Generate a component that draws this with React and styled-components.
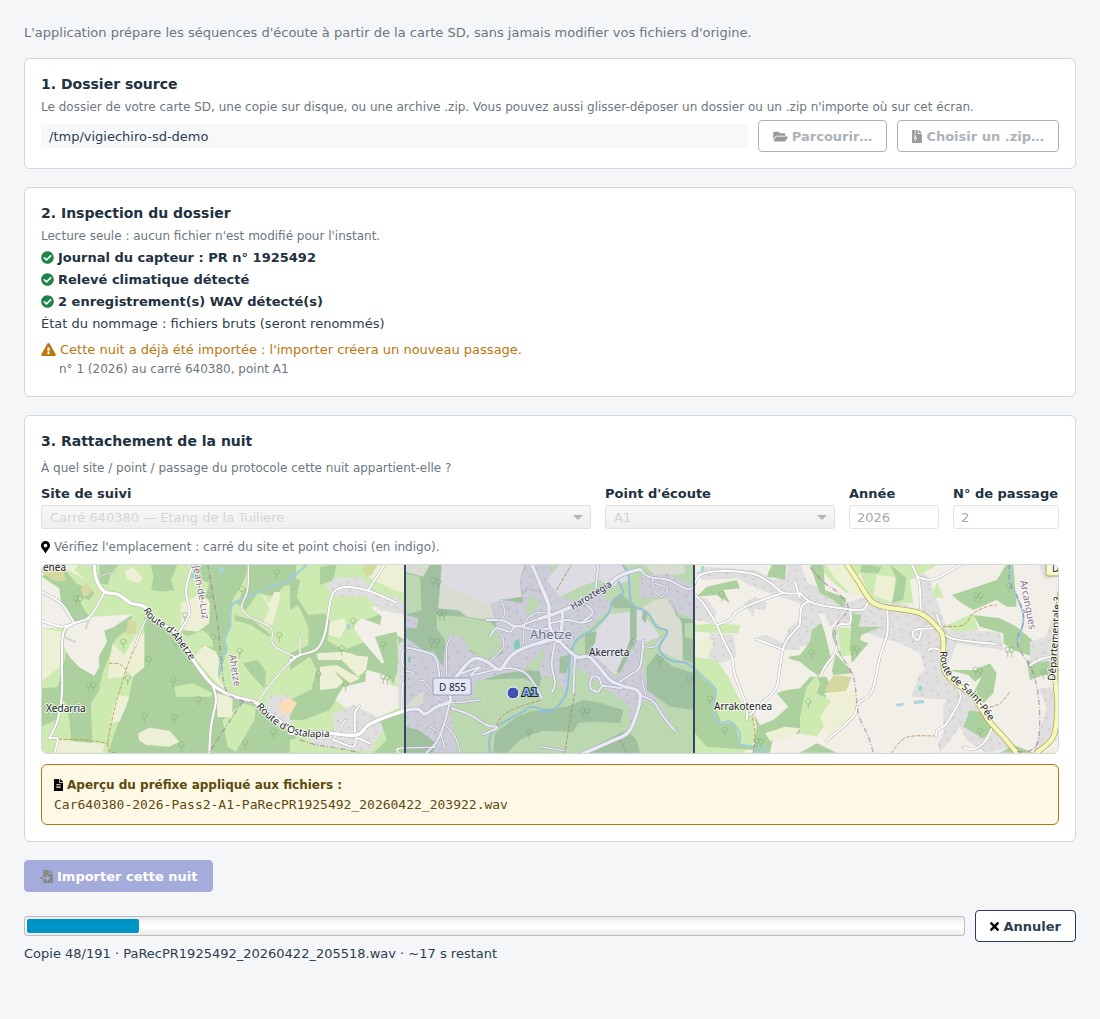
import styled, { createGlobalStyle } from "styled-components";
import {
  FaCheckCircle,
  FaExclamationTriangle,
  FaFileAlt,
  FaFileArchive,
  FaFileImport,
  FaFolderOpen,
  FaMapMarkerAlt,
  FaTimes,
} from "react-icons/fa";

const GlobalStyle = createGlobalStyle`
  * {
    box-sizing: border-box;
  }

  body {
    margin: 0;
    background: #f4f6f8;
    color: #2c3e50;
    font-family: "DejaVu Sans", sans-serif;
    font-size: 13px;
    line-height: 17px;
  }

  h2, p, ul {
    margin: 0;
    padding: 0;
  }
`;

const Page = styled.main`
  display: flex;
  flex-direction: column;
  gap: 18px;
  padding: 24px;
`;

// the glyphs have different widths for the same height
const Icon = styled.span`
  flex-shrink: 0;

  svg {
    display: block;
    width: ${({ $width }) => $width}px;
    height: ${({ $height }) => $height || 13}px;
  }
`;

const Line = styled.p`
  display: flex;
  align-items: center;
  gap: 4px;
  margin-bottom: -1px;
`;

const Intro = styled(Line)`
  color: #6b7780;
`;

const Card = styled.section`
  display: flex;
  flex-direction: column;
  gap: ${({ $gap }) => $gap || 6}px;
  padding: 16px;
  background: #fff;
  border: 1px solid #d0d7de;
  border-radius: 6px;
`;

const Title = styled.h2`
  color: #22313f;
  font-size: 14px;
  line-height: 18px;
`;

const Hint = styled(Line)`
  color: #6b7780;
  font-size: 12px;
  line-height: 16px;

  svg {
    color: #000;
  }
`;

const Row = styled.div`
  display: flex;
  align-items: center;
  gap: 10px;
`;

const PathInput = styled.input`
  flex: 1;
  min-width: 0;
  height: 24px;
  padding: 0 8px;
  border: 0;
  border-radius: 3px;
  background: #f6f8fa;
  color: #2c3e50;
  font: inherit;
`;

const Button = styled.button`
  display: flex;
  align-items: center;
  justify-content: center;
  gap: 4px;
  height: 32px;
  padding: 0 14px;
  border: 1px solid #2c3e50;
  border-radius: 4px;
  background: #fff;
  color: #2c3e50;
  font: inherit;
  font-weight: bold;
  white-space: nowrap;

  svg {
    color: #000;
  }

  &:disabled {
    border-color: #abb2b9;
    color: #abb2b9;
  }

  &:disabled svg {
    color: #999;
  }
`;

const ImportButton = styled(Button)`
  align-self: flex-start;
  padding: 0 15px;

  &:disabled {
    border-color: #a5acdc;
    background: #a5acdc;
    color: #fff;
  }

  &:disabled svg {
    color: #888;
  }
`;

const CheckList = styled.ul`
  display: flex;
  flex-direction: column;
  gap: 6px;
  list-style: none;
`;

const CheckItem = styled.li`
  display: flex;
  align-items: center;
  gap: 4px;
  height: 16px;
  color: #22313f;
  font-weight: bold;
  line-height: 17px;

  svg {
    color: #1e8449;
  }
`;

const Warning = styled.div`
  display: flex;
  flex-direction: column;
  gap: 4px;
  padding: 4px 0;

  ${Hint} {
    padding-left: 18px;
  }
`;

const WarningTitle = styled(Line)`
  color: #b9770e;
`;

const Fields = styled.div`
  display: grid;
  grid-template-columns: 1fr 230px 90px 106px;
  gap: 14px;
`;

const Field = styled.div`
  display: flex;
  flex-direction: column;
  gap: 3px;

  label {
    color: #22313f;
    font-weight: bold;
    white-space: nowrap;
  }
`;

const SelectWrap = styled.div`
  display: grid;
  align-items: center;

  select,
  svg {
    grid-area: 1 / 1;
  }

  svg {
    justify-self: end;
    margin-right: 8px;
    pointer-events: none;
  }
`;

const Select = styled.select`
  appearance: none;
  width: 100%;
  height: 24px;
  padding: 1px 8px 0;
  border: 1px solid #dedede;
  border-radius: 3px;
  background: linear-gradient(#f8f8f8, #efefef);
  color: #d6d6d6;
  font: inherit;
  opacity: 1;
`;

const NumberInput = styled.input`
  width: 100%;
  height: 24px;
  padding: 0 7px;
  border: 1px solid #e3e3e3;
  border-radius: 3px;
  background: linear-gradient(#f9f9f9, #fff 5px);
  color: #a8a8a8;
  font: inherit;
`;

const MapFrame = styled.div`
  height: 190px;
  overflow: hidden;
  border: 1px solid #d0d7de;
  border-radius: 6px;

  svg {
    display: block;
    width: 100%;
    height: 100%;
  }
`;

const Preview = styled.div`
  display: flex;
  flex-direction: column;
  gap: 4px;
  padding: 12px;
  border: 1px solid #b9770e;
  border-radius: 6px;
  background: #fef9e7;
  color: #5d4a0e;
`;

const PreviewTitle = styled(Line)`
  font-size: 12px;
  font-weight: bold;
  line-height: 16px;

  svg {
    color: #000;
  }
`;

const FileName = styled.code`
  margin-bottom: -1px;
  font-family: "DejaVu Sans Mono", monospace;
  font-size: 13px;
  line-height: 17px;
`;

const Track = styled.div`
  flex: 1;
  height: 20px;
  padding: 2px;
  border: 1px solid #bcbcbc;
  border-radius: 3px;
  background: linear-gradient(#e9e9e9, #fff 45%, #fff 60%, #ebebeb);
`;

const Bar = styled.div`
  height: 100%;
  border-radius: 2px;
  background: linear-gradient(#0090bd, #0096c9 50%, #0091c2);
`;

const Progress = styled.div`
  display: flex;
  flex-direction: column;
  gap: 3px;
`;

/* ---------- map ---------- */

const LAND = {
  wood: "#add19e",
  grass: "#cdebb0",
  farm: "#eef0d5",
  land: "#f2efe9",
  town: "#e0dfdf",
  scrub: "#d6d99f",
  site: "#ffdcb8",
  pool: "#aad3df",
  pitch: "#88e0be",
};

// each sheet is drawn in its own units, three to a screen pixel
const SHEETS = [
  {
    x: 0,
    areas: [
      ["wood", "15,45 70,25 105,35 135,55 175,100 160,120 125,110 145,150 165,175 120,190 70,130 45,70"],
      ["wood", "190,12 250,12 225,40 215,75 190,70"],
      ["wood", "345,12 425,12 405,60 415,90 380,95 345,90 352,55"],
      ["wood", "170,180 290,165 275,210 240,235 200,340 190,390 165,430 170,578 110,578 100,480 90,430 60,400 75,345 90,280 130,250"],
      ["wood", "15,385 75,380 70,470 45,520 15,500"],
      ["wood", "325,170 430,215 460,280 530,370 600,410 655,430 700,480 780,530 780,578 215,578 240,490 280,410 290,350 325,320"],
      ["wood", "470,12 640,12 625,60 590,120 585,180 565,300 550,345 490,255 440,220 450,160 500,140 520,70 475,50"],
      ["wood", "640,12 780,12 780,70 740,80 720,110 665,100 630,150 600,130 640,70"],
      ["wood", "595,165 650,180 705,225 690,240 640,210 600,215"],
      ["wood", "620,320 650,300 690,330 690,380 655,360"],
      ["grass", "75,12 170,12 190,60 160,90 120,70"],
      ["grass", "205,120 325,150 310,175 240,155 200,200 160,195"],
      ["grass", "15,500 60,480 80,578 15,578"],
      ["grass", "190,370 260,350 300,330 250,480 215,578 165,540 200,500"],
      ["grass", "415,380 470,370 530,400 525,410 420,410"],
      ["grass", "590,180 645,195 705,235 720,262 780,290 750,330 680,380 645,420 585,400 575,330 570,240"],
      ["grass", "560,480 620,430 660,440 655,480 600,575 575,560"],
      ["grass", "340,140 430,150 420,200 370,180"],
      ["grass", "450,230 500,210 535,240 530,262 500,255 475,285"],
      ["wood", "620,310 665,300 690,335 685,385 655,355"],
      ["farm", "15,205 75,215 72,320 15,365"],
      ["farm", "15,12 130,12 115,30 150,60 75,20 15,50"],
      ["farm", "230,250 265,285 300,225 325,222 324,322 290,350 268,330 270,350 215,355 222,305"],
      ["farm", "245,405 280,410 270,440 250,485 222,490 230,450"],
      ["farm", "307,520 340,503 400,512 430,545 400,560 330,555 308,540"],
      ["farm", "435,130 490,105 522,120 520,190 485,215 435,210"],
      ["farm", "475,290 505,255 540,275 550,300 545,350 575,400 520,345"],
      ["farm", "540,400 590,410 588,470 545,472"],
      ["farm", "675,95 700,130 715,95 735,97 710,195 682,190 700,145"],
      ["farm", "68,540 205,552 200,578 55,578"],
      ["farm", "265,35 290,20 320,55 310,70 275,60"],
      ["scrub", "135,85 150,70 168,85 160,105 140,110"],
      ["scrub", "15,12 75,12 90,60 60,65 20,40"],
      ["scrub", "275,180 300,185 298,222 270,222"],
      ["land", "15,50 70,85 75,130 112,185 80,205 15,205"],
      ["land", "100,200 175,170 290,163 235,200 205,212 213,245 188,290 190,320 175,347 130,322 100,290 80,250"],
      ["town", "695,408 770,402 780,480 730,500 690,465"],
      ["site", "727,432 755,418 772,425 774,450 738,466"],
      ["pool", "545,22 560,20 568,35 552,38"],
      ["pitch", "465,40 474,38 474,55 466,56"],
    ],
    roads: [
      [5, [175, 12, 180, 55, 205, 95, 245, 103, 285, 130, 325, 140, 365, 185, 410, 210, 440, 245, 465, 290, 500, 340, 535, 378, 590, 408, 660, 428, 700, 460, 780, 520]],
      [3, [205, 98, 160, 172, 110, 192, 80, 230, 78, 400, 65, 480, 40, 535]],
      [3, [15, 95, 75, 130, 115, 190]],
      [3, [15, 182, 75, 200, 115, 190]],
      [3, [470, 12, 450, 90, 460, 160, 430, 215]],
      [2, [330, 178, 315, 210, 297, 260]],
      [3, [530, 375, 540, 420, 525, 500, 520, 578]],
      [3, [40, 535, 65, 537, 55, 578]],
      [2, [637, 12, 635, 90, 617, 140, 640, 170, 705, 205, 712, 255, 780, 292]],
      [2, [665, 428, 690, 390, 740, 330, 780, 292]],
      [1, [188, 50, 235, 35]],
      [1, [85, 232, 118, 245]],
      [1, [150, 205, 160, 175]],
    ],
    streams: [[780, 45, 740, 70, 685, 88, 650, 105, 600, 125, 582, 150, 583, 200, 565, 235, 572, 270, 555, 300, 550, 345]],
    borders: [
      [515, 12, 530, 100, 545, 190, 555, 290, 575, 400, 655, 428],
      [620, 425, 560, 515, 520, 578],
    ],
    tracks: [
      [297, 260, 270, 330, 235, 450, 215, 560, 240, 578],
      [68, 538, 150, 540, 215, 550],
      [220, 310, 250, 312, 270, 330],
    ],
    trees: [
      [120, 118], [132, 118], [338, 300], [730, 228], [532, 234], [420, 250], [275, 357], [412, 363],
      [158, 378], [172, 378], [487, 420], [325, 470], [415, 474], [712, 518], [628, 550], [437, 556],
      [722, 38], [618, 90], [520, 108], [262, 248], [611, 275], [447, 168],
    ],
  },
  {
    x: 762,
    areas: [
      ["farm", "225,12 345,12 345,100 310,90 240,55"],
      ["wood", "0,50 30,60 20,110 55,165 105,160 130,200 110,240 160,270 240,240 225,180 300,150 330,160 345,190 345,235 330,320 310,360 235,330 190,370 80,400 50,360 0,420"],
      ["wood", "90,20 140,12 130,60 90,75"],
      ["grass", "0,150 25,135 55,200 55,255 0,280"],
      ["grass", "110,165 165,135 210,150 200,200 180,240 150,215"],
      ["grass", "0,330 60,290 80,330 60,400 0,440"],
      ["wood", "0,420 60,390 150,350 240,340 235,370 150,400 120,450 40,480 0,480"],
      ["farm", "120,185 165,175 168,200 150,235 115,225"],
      ["farm", "80,280 160,275 200,285 150,300 85,300"],
      ["farm", "90,320 140,315 210,355 180,370 130,330 160,365 140,385 90,390"],
      ["farm", "155,300 180,285 235,290 228,330 205,350"],
      ["scrub", "218,30 230,12 265,12 245,45 228,48"],
      ["land", "190,200 215,175 270,195 275,170 240,140 345,140 345,240 320,225 335,300 275,310 215,240"],
      ["land", "230,330 290,345 300,375 325,380 330,440 230,490 135,420 160,380 225,365"],
      ["town", "110,80 130,55 215,50 260,100 320,110 345,135 345,165 270,150 230,110 130,110"],
      ["town", "130,460 190,435 260,470 300,480 240,575 70,555 50,530 130,520"],
      ["town", "320,260 345,235 345,450 325,440"],
      ["wood", "270,480 345,450 345,578 250,578 290,540"],
      ["wood", "255,230 320,215 325,300 310,375 280,300"],
      ["grass", "30,530 60,555 200,578 0,578 0,540"],
      ["site", "0,415 20,430 0,465"],
      ["pool", "170,195 180,190 182,205 172,210"],
      // inside the square
      ["wood", "345,12 780,12 780,578 345,578"],
      ["grass", "345,40 390,50 395,150 345,165"],
      ["farm", "345,12 420,12 400,50 345,35"],
      ["land", "455,12 705,12 690,60 695,110 630,120 620,180 500,150 445,145"],
      ["farm", "455,75 560,115 630,155 620,185 530,170 500,145 450,145"],
      ["grass", "440,165 520,170 600,185 640,220 630,280 590,300 540,270 500,290 440,230"],
      ["town", "345,230 400,270 460,280 480,220 520,235 540,275 600,300 640,280 620,200 600,130 640,120 700,130 690,60 710,12 780,12 780,340 720,330 640,340 560,365 550,410 480,450 500,500 510,578 345,578"],
      ["town", "345,165 385,175 380,205 345,205"],
      ["wood", "385,200 435,200 465,240 460,320 430,270 400,260"],
      ["grass", "560,360 700,355 735,370 780,410 780,578 500,578 480,440 550,410"],
      ["wood", "640,500 680,470 720,455 780,448 780,512 735,520 690,540 650,578 610,578 615,520"],
      ["grass", "705,150 725,100 750,130 720,170"],
      ["grass", "745,285 780,270 780,330 700,330"],
      ["farm", "345,440 400,390 400,430 350,450"],
      ["wood", "345,500 385,510 440,550 430,578 345,578"],
      ["pitch", "672,245 688,235 690,268 672,268"],
      ["pitch", "354,290 363,290 363,307 354,307"],
    ],
    roads: [
      [5, [0, 520, 100, 518, 200, 525, 240, 492, 345, 452, 385, 448, 405, 462, 440, 440, 480, 425, 480, 395, 500, 350, 550, 297, 590, 305, 630, 328, 660, 290, 700, 265, 780, 238]],
      [3, [0, 302, 30, 285, 80, 268, 105, 220, 125, 110, 160, 82, 235, 92, 320, 128]],
      [3, [235, 90, 285, 12]],
      [5, [725, 12, 750, 70, 780, 145]],
      [3, [345, 262, 385, 270, 435, 290, 448, 350, 450, 400]],
      [2, [470, 350, 470, 260, 487, 225]],
      [3, [485, 445, 540, 465, 590, 495, 622, 503, 580, 523]],
      [3, [480, 425, 460, 500, 440, 545, 410, 578]],
      [2, [460, 490, 495, 530, 510, 578]],
      [2, [380, 370, 400, 362, 440, 410, 480, 428, 570, 420]],
      [3, [500, 345, 570, 322, 545, 345, 640, 325, 700, 335, 735, 375, 755, 415]],
      [3, [590, 180, 640, 182, 680, 200, 735, 180, 780, 170]],
      [3, [600, 230, 620, 205, 660, 215, 680, 198, 740, 210, 780, 205]],
      [2, [632, 120, 645, 155, 635, 180]],
      [2, [600, 302, 640, 260, 635, 220]],
      [2, [700, 250, 705, 190, 735, 160, 780, 160]],
      [2, [130, 540, 165, 480]],
      [3, [195, 515, 195, 460, 208, 438]],
      [3, [130, 540, 190, 560, 200, 535, 240, 550]],
      [2, [325, 578, 330, 565, 440, 562]],
      [2, [345, 262, 335, 290, 345, 330, 370, 340, 340, 370, 335, 450]],
      [2, [30, 285, 30, 230]],
      [2, [420, 500, 450, 520, 465, 565]],
      [1, [700, 100, 715, 85, 750, 95]],
    ],
    streams: [
      [0, 50, 20, 40, 50, 14],
      [600, 578, 598, 540, 615, 505, 670, 470, 700, 455, 725, 440, 780, 455],
    ],
    borders: [[30, 540, 80, 555, 130, 562, 210, 578]],
    tracks: [[620, 495, 640, 465, 690, 440, 755, 420]],
    trees: [
      [190, 185], [280, 255], [430, 65], [444, 68], [280, 353], [292, 355], [167, 375], [450, 162],
      [462, 164], [425, 245], [440, 247], [718, 518], [155, 268], [85, 345],
    ],
  },
  {
    x: 1512,
    areas: [
      ["town", "0,12 30,12 50,100 110,130 190,100 215,140 160,190 100,240 85,400 60,410 20,400 0,340"],
      ["land", "100,12 250,12 270,60 215,80 180,60 120,80 60,110 20,60 60,12"],
      ["land", "205,165 300,150 340,200 360,230 320,245 250,330 200,350 170,310 150,270 170,210 230,140"],
      ["farm", "300,150 340,120 380,115 410,165 430,200 425,305 355,270 380,215"],
      ["farm", "310,12 430,12 435,40 350,50"],
      ["town", "300,50 380,40 465,80 465,180 400,150 380,110 300,115"],
      ["town", "70,290 160,280 230,350 290,240 310,240 310,330 340,400 400,470 410,520 370,500 300,440 300,580 130,580 270,520 260,430 190,380"],
      ["grass", "0,270 12,280 10,300 0,305"],
      ["wood", "210,130 240,100 275,130 270,145 225,145"],
      ["wood", "270,135 290,140 290,230 260,300 240,340 230,335 270,240"],
      ["wood", "135,220 170,215 165,250 150,270 160,305 135,295"],
      ["wood", "310,150 325,160 315,190 305,175"],
      ["wood", "60,290 90,285 80,340 58,340"],
      ["wood", "395,120 410,170 465,180 465,190 435,190 435,230 465,240 465,310 430,300 425,190"],
      ["grass", "345,275 390,305 465,330 465,578 240,578 275,500 290,430 330,420 400,500 350,420 320,330"],
      ["wood", "350,280 400,320 465,340 465,450 390,440 320,390 320,320"],
      ["grass", "0,360 45,345 80,400 85,460 200,420 270,440 270,510 200,578 0,578"],
      ["wood", "0,448 80,440 130,420 185,430 250,450 240,490 160,485 115,490 100,515 0,512"],
      ["wood", "200,540 260,510 290,540 300,578 150,578"],
      // east of the square
      ["land", "465,12 780,12 780,578 465,578"],
      ["town", "465,40 490,20 560,25 650,30 700,60 740,45 745,12 780,12 780,130 690,100 650,85 590,55 490,60"],
      ["town", "465,115 500,115 530,155 520,190 465,180"],
      ["town", "610,130 645,110 680,130 675,150 645,145 640,170"],
      ["town", "500,290 510,220 580,225 590,290 545,310"],
      ["town", "650,230 680,225 730,250 745,205 780,180 780,270 740,270"],
      ["wood", "470,110 500,80 590,60 600,85 550,90 570,130 530,105"],
      ["wood", "680,50 695,15 740,12 735,60 715,55"],
      ["grass", "465,195 520,190 600,195 595,220 540,220 465,215"],
      ["farm", "465,235 520,240 505,290 465,280"],
      ["grass", "465,290 530,300 565,350 600,420 640,470 650,540 610,578 465,578"],
      ["wood", "465,330 495,360 530,390 525,440 545,490 585,490 600,550 645,560 640,570 500,560 465,520"],
      ["wood", "640,460 650,500 720,480 780,470 780,385 740,390 710,400 745,440 700,480 660,495"],
      ["wood", "650,500 780,460 780,520 700,530 690,578 640,578"],
      ["farm", "675,520 735,500 780,505 760,530 690,542"],
      ["wood", "745,290 780,285 780,305 750,297"],
      ["pitch", "484,18 491,18 491,34 484,34"],
    ],
    roads: [
      [5, [0, 72, 25, 130, 30, 200, 55, 240, 110, 290, 150, 292, 210, 360, 250, 378, 300, 405, 270, 510, 210, 545, 130, 580]],
      [5, [0, 175, 60, 155, 170, 105, 235, 50, 300, 28]],
      [3, [300, 28, 325, 50, 385, 60, 450, 88, 480, 45, 550, 33, 640, 42, 690, 68, 730, 98, 780, 100]],
      [5, [0, 250, 40, 238, 60, 240, 68, 160]],
      [3, [30, 190, 80, 180, 125, 188, 155, 180]],
      [3, [125, 188, 158, 160, 140, 135]],
      [3, [175, 12, 165, 100]],
      [3, [45, 250, 35, 310, 45, 370, 35, 398]],
      [3, [105, 292, 100, 400]],
      [3, [300, 405, 340, 425, 370, 470, 405, 512]],
      [3, [240, 365, 270, 345, 300, 320, 310, 242]],
      [2, [310, 260, 345, 260, 362, 235]],
      [3, [245, 385, 190, 378, 175, 395, 152, 385, 155, 352, 175, 352, 185, 375]],
      [2, [305, 360, 318, 405]],
      [2, [338, 55, 342, 90, 365, 110, 382, 85, 345, 70]],
      [3, [465, 105, 490, 130, 530, 195, 555, 250, 575, 290, 585, 345, 620, 440, 620, 478]],
      [3, [730, 98, 640, 130, 590, 155, 570, 180, 530, 195]],
      [3, [650, 238, 728, 268]],
      [3, [780, 195, 735, 250, 720, 320, 708, 385, 665, 430, 630, 465]],
      [3, [765, 65, 780, 115]],
      [2, [0, 560, 70, 572]],
    ],
    streams: [
      [0, 455, 40, 450, 80, 395, 90, 290, 110, 240, 155, 210, 205, 160, 220, 120, 250, 100, 235, 65],
      [245, 12, 265, 45, 275, 130, 320, 155, 350, 200, 382, 215, 358, 265, 390, 300, 440, 310, 490, 350, 528, 390, 520, 440, 535, 488, 570, 485, 600, 520, 600, 555, 645, 558, 650, 578],
      [660, 578, 668, 558, 680, 578],
    ],
    borders: [],
    tracks: [
      [105, 400, 90, 480, 75, 578],
      [635, 458, 645, 520, 640, 578],
      [240, 540, 260, 578],
      [50, 90, 95, 12],
    ],
    trees: [[360, 300], [448, 362], [510, 418], [128, 455], [142, 455], [280, 248], [650, 545], [663, 548], [545, 105], [555, 512]],
  },
  {
    x: 2292,
    areas: [
      ["land", "0,12 780,12 780,578 0,578"],
      ["town", "0,60 40,75 130,130 200,110 215,90 330,140 370,150 350,12 390,60 440,210 600,215 610,270 470,250 440,330 480,370 520,420 570,480 650,560 560,578 500,540 480,500 420,578 400,490 440,420 335,410 370,310 340,270 190,215 110,180 90,200 50,250 0,260"],
      ["town", "0,12 20,60 40,180 30,200 0,200"],
      ["grass", "50,12 420,12 330,60 340,130 260,130 210,110 180,40 140,100 90,60"],
      ["farm", "75,12 145,12 200,90 160,110 110,60"],
      ["farm", "230,45 285,50 280,130 220,105"],
      ["wood", "30,12 70,12 75,90 140,115 130,145 100,120 60,100 45,60"],
      ["wood", "185,12 245,20 235,40 200,40 180,35"],
      ["wood", "270,12 320,55 310,120 275,130 290,60"],
      ["grass", "115,200 150,205 160,285 120,290"],
      ["wood", "155,160 185,165 175,200 245,200 185,225 180,240 205,250 155,310 150,250"],
      ["wood", "0,285 30,245 35,210 75,180 80,230 95,300 60,350 30,330 0,305"],
      ["wood", "100,200 110,220 105,280 160,340 100,345 80,290"],
      ["land", "55,160 75,160 110,270 80,400 60,350 95,300 75,220"],
      ["wood", "0,385 30,350 80,350 95,390 60,430 30,480 0,470"],
      ["grass", "20,380 50,345 60,370 50,400 90,420 100,460 50,530 0,520 0,470"],
      ["scrub", "75,390 100,345 155,350 130,415 90,415"],
      ["farm", "70,400 165,390 175,460 90,540 60,470 95,420"],
      ["wood", "0,578 50,550 110,578"],
      ["land", "215,230 290,245 360,280 375,330 340,355 330,410 430,420 430,520 400,578 215,578 175,450 230,380"],
      ["grass", "395,110 410,65 433,115"],
      ["grass", "430,200 520,160 535,210 470,215"],
      ["wood", "455,105 530,80 590,60 620,12 640,12 650,140 620,140 590,120 520,150 485,130"],
      ["wood", "520,165 600,175 650,200 720,260 700,290 640,270 610,250 610,220 540,200"],
      ["wood", "445,330 525,330 570,310 590,340 580,400 550,430 520,400 545,350 525,365 505,345"],
      ["wood", "510,450 560,460 580,510 550,535 490,500"],
      ["wood", "680,300 775,305 775,330 690,360"],
      ["wood", "600,578 640,555 700,578"],
      ["town", "690,245 740,230 775,100 775,300 690,310"],
      ["town", "715,385 775,380 775,500 720,578 700,578 740,440"],
      ["town", "715,12 775,12 775,50 735,60"],
      ["pitch", "356,378 366,378 366,392 356,392"],
      ["pitch", "505,470 517,460 520,468 508,476"],
      ["pitch", "434,235 441,235 441,252 434,252"],
      ["pool", "342,422 372,420 372,430 342,432"],
      ["pool", "288,432 310,428 311,436 290,440"],
    ],
    roads: [
      [3, [0, 100, 40, 130, 125, 145, 185, 150, 205, 125]],
      [3, [150, 148, 150, 190, 112, 198, 108, 270, 75, 320, 60, 350]],
      [3, [0, 190, 5, 140, 25, 125]],
      [3, [262, 150, 262, 220, 240, 290, 215, 395, 175, 430, 160, 470, 80, 542]],
      [3, [335, 12, 358, 70, 362, 155]],
      [3, [350, 50, 400, 58, 485, 12]],
      [3, [410, 165, 430, 215, 455, 235, 520, 245, 585, 252]],
      [3, [400, 205, 350, 208, 338, 225, 355, 240, 365, 212]],
      [3, [385, 270, 400, 265, 425, 272]],
      [3, [478, 390, 480, 420, 440, 490, 412, 510, 408, 530]],
      [3, [578, 500, 555, 545, 520, 568, 490, 562]],
      [3, [690, 315, 730, 295, 775, 290]],
    ],
    mains: [
      [140, 12, 175, 65, 215, 125, 260, 142, 360, 160, 415, 205, 430, 240, 430, 320, 455, 360, 520, 410, 565, 480, 610, 530, 650, 578],
      [710, 578, 760, 530, 772, 440, 765, 340, 768, 240, 780, 100],
    ],
    streams: [[630, 12, 632, 70, 650, 110, 670, 170, 655, 250]],
    borders: [
      [30, 22, 75, 70, 110, 95, 145, 145, 110, 198, 115, 270, 160, 350, 175, 460, 205, 530, 220, 578],
      [628, 12, 630, 70, 652, 110, 672, 180, 652, 250, 700, 340, 718, 440, 715, 540, 690, 572, 650, 575],
    ],
    tracks: [
      [430, 200, 490, 195, 520, 160, 560, 140, 590, 135],
      [555, 445, 600, 430, 630, 395],
      [275, 578, 320, 532, 410, 528],
    ],
    trees: [[35, 280], [158, 268], [170, 270], [528, 108], [541, 110], [628, 80], [623, 272], [635, 272], [527, 332], [540, 334], [730, 338], [742, 338], [25, 428], [540, 515]],
  },
];

// Catmull-Rom through a flat list of coordinates
const smooth = (flat) => {
  const p = [];
  for (let i = 0; i < flat.length; i += 2) p.push([flat[i], flat[i + 1]]);
  let d = `M${p[0]}`;
  for (let i = 0; i < p.length - 1; i++) {
    const a = p[i - 1] || p[i];
    const b = p[i];
    const c = p[i + 1];
    const e = p[i + 2] || c;
    d += `C${b[0] + (c[0] - a[0]) / 6} ${b[1] + (c[1] - a[1]) / 6} ${c[0] - (e[0] - b[0]) / 6} ${c[1] - (e[1] - b[1]) / 6} ${c}`;
  }
  return d;
};

const Sheets = ({ draw }) =>
  SHEETS.map((sheet) => (
    <g key={sheet.x} transform={`translate(${sheet.x} 0)`}>
      {draw(sheet)}
    </g>
  ));

const MapLabel = styled.text`
  font-family: "Noto Sans", sans-serif;
  font-size: ${({ $size }) => $size || 10}px;
  fill: ${({ $color }) => $color || "#222"};
  stroke: #fff;
  stroke-opacity: 0.75;
  stroke-width: 2px;
  stroke-linejoin: round;
  paint-order: stroke;
`;

const SiteMap = () => (
  <svg viewBox="0 0 1016 188" preserveAspectRatio="xMidYMid slice" role="img" aria-label="Carte du site">
    <defs>
      <pattern id="houses" width="83" height="67" patternUnits="userSpaceOnUse" patternTransform="rotate(12)">
        <g fill="#d2c4bc">
          <rect x="5" y="4" width="7" height="5" />
          <rect x="33" y="10" width="5" height="6" />
          <rect x="62" y="2" width="6" height="5" />
          <rect x="14" y="27" width="5" height="5" />
          <rect x="47" y="31" width="7" height="5" />
          <rect x="73" y="38" width="5" height="6" />
          <rect x="25" y="50" width="6" height="6" />
          <rect x="58" y="55" width="5" height="5" />
        </g>
      </pattern>
      <path id="ahetze-road" d="M101 45C108 60 122 61 130 71S140 83 155 106" />
      <path id="ostalapia-road" d="M214 142C225 154 238 165 252 169S272 172 290 172" />
      <path id="haroztegia-road" d="M531 45L575 18" />
      <path id="saint-pee-road" d="M898 86C898 114 915 118 926 129S937 142 960 174" />
    </defs>

    <g transform="translate(-6 -5) scale(.33333)" strokeLinejoin="round" strokeLinecap="round" fill="none">
      <rect width="3100" height="600" fill="#cdebb0" />
      <Sheets
        draw={({ areas }) =>
          areas.map(([kind, points], i) => (
            <g key={i} stroke="none">
              <polygon points={points} fill={LAND[kind]} />
              {kind === "town" && <polygon points={points} fill="url(#houses)" />}
            </g>
          ))
        }
      />
      <Sheets
        draw={({ streams }) => streams.map((s, i) => <path key={i} d={smooth(s)} stroke="#9fcfdd" strokeWidth="6" />)}
      />
      <Sheets
        draw={({ trees }) =>
          trees.map(([x, y]) => (
            <g key={`${x}-${y}`} stroke="#8fb583" strokeWidth="2">
              <circle cx={x} cy={y - 3} r="8" />
              <path d={`M${x} ${y + 2}v16`} />
            </g>
          ))
        }
      />
      <Sheets
        draw={({ tracks }) =>
          tracks.map((t, i) => <path key={i} d={smooth(t)} stroke="#b98f4b" strokeWidth="2.5" strokeDasharray="9 7" />)
        }
      />
      <Sheets
        draw={({ roads }) => roads.map(([w, r], i) => <path key={i} d={smooth(r)} stroke="#b5b2b5" strokeWidth={w * 2 + 3} />)}
      />
      <Sheets
        draw={({ roads }) => roads.map(([w, r], i) => <path key={i} d={smooth(r)} stroke="#fff" strokeWidth={w * 2} />)}
      />
      <Sheets
        draw={({ mains = [] }) =>
          mains.map((m, i) => (
            <g key={i}>
              <path d={smooth(m)} stroke="#a5a653" strokeWidth="17" />
              <path d={smooth(m)} stroke="#f6f8b8" strokeWidth="13" />
            </g>
          ))
        }
      />
      <Sheets
        draw={({ borders }) =>
          borders.map((b, i) => (
            <path key={i} d={smooth(b)} stroke="#9a6f9b" strokeOpacity=".6" strokeWidth="4" strokeDasharray="16 6 3 6" strokeLinecap="butt" />
          ))
        }
      />
    </g>

    <rect x="391" y="113" width="38" height="17" rx="2" fill="#fbfbff" stroke="#aaa9b5" />
    <rect x="1004" y="-6" width="30" height="17" rx="2" fill="#f6f8d0" stroke="#a5a653" />

    <MapLabel x="-3" y="6">renea</MapLabel>
    <MapLabel x="4" y="147">Xedarria</MapLabel>
    <MapLabel x="672" y="145">Arrakotenea</MapLabel>
    <MapLabel x="547" y="91">Akerreta</MapLabel>
    <MapLabel x="488" y="74" $size={13} $color="#74747c">Ahetze</MapLabel>
    <MapLabel x="397" y="126">D 855</MapLabel>
    <MapLabel x="1010" y="7">D 3</MapLabel>
    <MapLabel $color="#8d6b8e" transform="translate(151 1) rotate(80)">Jean-de-Luz</MapLabel>
    <MapLabel $color="#8d6b8e" transform="translate(187 90) rotate(81)">Ahetze</MapLabel>
    <MapLabel $color="#8d6b8e" transform="translate(978 16) rotate(79)">Arcangues</MapLabel>
    <MapLabel transform="translate(1013 116) rotate(-86)">Départementale 3</MapLabel>
    <MapLabel>
      <textPath href="#ahetze-road">Route d'Ahetze</textPath>
    </MapLabel>
    <MapLabel>
      <textPath href="#ostalapia-road">Route d'Ostalapia</textPath>
    </MapLabel>
    <MapLabel $size={9}>
      <textPath href="#haroztegia-road">Haroztegia</textPath>
    </MapLabel>
    <MapLabel>
      <textPath href="#saint-pee-road">Route de Saint-Pée</textPath>
    </MapLabel>

    <rect x="363" y="-4" width="289" height="196" fill="#3f51b5" fillOpacity=".12" stroke="#34495e" strokeWidth="2" />
    <circle cx="471" cy="128" r="6" fill="#3f51b5" stroke="#fff" strokeWidth="1" />
    <text
      x="480"
      y="131"
      fontFamily="DejaVu Sans, sans-serif"
      fontSize="11"
      fontWeight="bold"
      fill="#8eb4f0"
      stroke="#1c2833"
      strokeWidth="2"
      paintOrder="stroke"
    >
      A1
    </text>
  </svg>
);

const SelectField = ({ id, label, value }) => (
  <Field>
    <label htmlFor={id}>{label}</label>
    <SelectWrap>
      <Select id={id} disabled defaultValue={value}>
        <option>{value}</option>
      </Select>
      <svg width="10" height="5" viewBox="0 0 10 5" aria-hidden="true">
        <path d="M0 0h10L5 5z" fill="#b4b4b4" />
      </svg>
    </SelectWrap>
  </Field>
);

const NumberField = ({ id, label, value }) => (
  <Field>
    <label htmlFor={id}>{label}</label>
    <NumberInput id={id} disabled defaultValue={value} />
  </Field>
);

const checks = ["Journal du capteur : PR n° 1925492", "Relevé climatique détecté", "2 enregistrement(s) WAV détecté(s)"];

const App = () => {
  const progress = 12;

  return (
    <>
      <GlobalStyle />
      <Page>
        <Intro>
          L'application prépare les séquences d'écoute à partir de la carte SD, sans jamais modifier vos fichiers
          d'origine.
        </Intro>

        <Card>
          <Title>1. Dossier source</Title>
          <Hint>
            Le dossier de votre carte SD, une copie sur disque, ou une archive .zip. Vous pouvez aussi glisser-déposer un
            dossier ou un .zip n'importe où sur cet écran.
          </Hint>
          <Row>
            <PathInput aria-label="Dossier source" readOnly value="/tmp/vigiechiro-sd-demo" />
            <Button disabled>
              <Icon $width={15}>
                <FaFolderOpen />
              </Icon>
              Parcourir…
            </Button>
            <Button disabled>
              <Icon $width={10}>
                <FaFileArchive />
              </Icon>
              Choisir un .zip…
            </Button>
          </Row>
        </Card>

        <Card>
          <Title>2. Inspection du dossier</Title>
          <Hint>Lecture seule : aucun fichier n'est modifié pour l'instant.</Hint>
          <CheckList>
            {checks.map((text) => (
              <CheckItem key={text}>
                <Icon $width={13}>
                  <FaCheckCircle />
                </Icon>
                {text}
              </CheckItem>
            ))}
          </CheckList>
          <Line>État du nommage : fichiers bruts (seront renommés)</Line>
          <Warning>
            <WarningTitle>
              <Icon $width={15}>
                <FaExclamationTriangle />
              </Icon>
              Cette nuit a déjà été importée : l'importer créera un nouveau passage.
            </WarningTitle>
            <Hint>n° 1 (2026) au carré 640380, point A1</Hint>
          </Warning>
        </Card>

        <Card $gap={10}>
          <Title>3. Rattachement de la nuit</Title>
          <Hint>À quel site / point / passage du protocole cette nuit appartient-elle ?</Hint>
          <Fields>
            <SelectField id="site" label="Site de suivi" value="Carré 640380 — Etang de la Tuiliere" />
            <SelectField id="point" label="Point d'écoute" value="A1" />
            <NumberField id="year" label="Année" value="2026" />
            <NumberField id="pass" label="N° de passage" value="2" />
          </Fields>
          <Hint>
            <Icon $width={9} $height={12}>
              <FaMapMarkerAlt />
            </Icon>
            Vérifiez l'emplacement : carré du site et point choisi (en indigo).
          </Hint>
          <MapFrame>
            <SiteMap />
          </MapFrame>
          <Preview>
            <PreviewTitle>
              <Icon $width={9} $height={12}>
                <FaFileAlt />
              </Icon>
              Aperçu du préfixe appliqué aux fichiers :
            </PreviewTitle>
            <FileName>Car640380-2026-Pass2-A1-PaRecPR1925492_20260422_203922.wav</FileName>
          </Preview>
        </Card>

        <ImportButton disabled>
          <Icon $width={13}>
            <FaFileImport />
          </Icon>
          Importer cette nuit
        </ImportButton>

        <Progress>
          <Row>
            <Track role="progressbar" aria-label="Import" aria-valuenow={progress} aria-valuemin={0} aria-valuemax={100}>
              <Bar style={{ width: `${progress}%` }} />
            </Track>
            <Button>
              <Icon $width={9}>
                <FaTimes />
              </Icon>
              Annuler
            </Button>
          </Row>
          <p>Copie 48/191 · PaRecPR1925492_20260422_205518.wav · ~17 s restant</p>
        </Progress>
      </Page>
    </>
  );
};

export default App;
